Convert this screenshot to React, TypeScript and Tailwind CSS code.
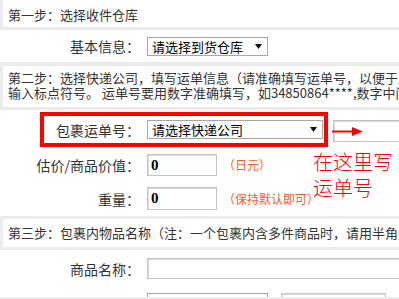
import React from "react";

const font = "font-[family-name:'Noto_Sans_CJK_SC',sans-serif]";

function FakeSelect({ text, width }: { text: string; width: string }) {
  return (
    <div
      className={`${width} h-[19px] shrink-0 border border-[#a6a6a6] bg-white flex items-center justify-between pl-[4px] pr-[5px] text-[13px] leading-[17px] text-black whitespace-nowrap overflow-hidden`}
    >
      <span>{text}</span>
      <svg width="7" height="5" viewBox="0 0 7 5" className="shrink-0">
        <polygon points="0,0 7,0 3.5,5" fill="#111" />
      </svg>
    </div>
  );
}

function TextBox({ value, width, height = "h-[22px]" }: { value?: string; width: string; height?: string }) {
  return (
    <div
      className={`${width} ${height} shrink-0 border border-[#c4c4c4] bg-white shadow-[inset_1px_1px_0_#dcdcdc] flex items-center pl-[3px] text-[15px] font-bold text-black font-[family-name:'Liberation_Serif',serif]`}
    >
      {value}
    </div>
  );
}

function Label({ children, width = "w-[140px]", red }: { children: React.ReactNode; width?: string; red?: boolean }) {
  return (
    <div
      className={`${width} shrink-0 text-right text-[14px] leading-[18px] whitespace-nowrap ${red ? "text-[#ff0000]" : "text-[#333]"}`}
    >
      {children}
    </div>
  );
}

export default function App() {
  return (
    <div className={`w-[399px] h-[299px] overflow-hidden bg-[#ebebeb] ${font}`}>
      <div className="h-[297px] w-[399px] overflow-hidden flex flex-col gap-[3px]">
        {/* Step 1 */}
        <div className="ml-[3px] h-[27px] shrink-0 bg-white pl-[5px] pt-[6px] text-[13px] leading-[17px] text-[#333] whitespace-nowrap">
          第一步：选择收件仓库
        </div>
        <div className="h-[32px] shrink-0 bg-white flex items-center">
          <Label>基本信息：</Label>
          <div className="ml-[7px]">
            <FakeSelect text="请选择到货仓库" width="w-[121px]" />
          </div>
        </div>

        {/* Step 2 */}
        <div className="mt-[1px] ml-[3px] h-[41px] shrink-0 bg-white pl-[5px] pt-[4px] text-[13px] leading-[15px] text-[#333] whitespace-nowrap">
          <div>第二步：选择快递公司，填写运单信息（请准确填写运单号，以便于及时查询入库状态，请勿</div>
          <div>输入标点符号。 运单号要用数字准确填写，如34850864****,数字中间不要有空格）</div>
        </div>
        <div className="relative h-[106px] shrink-0 bg-white pt-[2px]">
          <div className="flex items-start">
            <div className="ml-[40px] w-[288px] h-[35px] shrink-0 border-4 border-[#ff0000] flex items-center">
              <Label width="w-[96px]">包裹运单号：</Label>
              <div className="ml-[7px]">
                <FakeSelect text="请选择快递公司" width="w-[176px]" />
              </div>
            </div>
            <div className="ml-[5px] mt-[8px]">
              <TextBox width="w-[90px]" />
            </div>
          </div>
          <div className="mt-[7px] flex items-center">
            <Label>估价/商品价值：</Label>
            <div className="ml-[7px]">
              <TextBox value="0" width="w-[70px]" />
            </div>
            <span className="ml-[6px] text-[12px] text-[#ff5a1e]">（日元）</span>
          </div>
          <div className="mt-[11px] flex items-center">
            <Label>重量：</Label>
            <div className="ml-[7px]">
              <TextBox value="0" width="w-[70px]" height="h-[23px]" />
            </div>
            <span className="ml-[6px] text-[12px] text-[#ff5a1e]">（保持默认即可）</span>
          </div>

          {/* annotation */}
          <svg
            className="absolute left-[332px] top-[17px]"
            width="31"
            height="9"
            viewBox="0 0 31 9"
          >
            <rect x="0" y="3.5" width="22" height="2" fill="#ff0000" />
            <polygon points="20,0 31,4.5 20,9" fill="#ff0000" />
          </svg>
          <div className="absolute left-[313px] top-[39px] text-[20px] leading-[26px] font-light text-[#ff0000] whitespace-nowrap">
            在这里写
            <br />
            运单号
          </div>
        </div>

        {/* Step 3 */}
        <div className="ml-[3px] h-[28px] shrink-0 bg-white pl-[5px] pt-[5px] text-[13px] leading-[17px] text-[#333] whitespace-nowrap">
          第三步：包裹内物品名称（注：一个包裹内含多件商品时，请用半角逗号隔开）
        </div>
        <div className="flex-1 bg-white pt-[8px]">
          <div className="flex items-center">
            <Label>商品名称：</Label>
            <div className="ml-[7px]">
              <TextBox width="w-[260px]" height="h-[21px]" />
            </div>
          </div>
          <div className="mt-[14px] flex items-start">
            <div className="mt-[4px]">
              <Label red>*商品属性：</Label>
            </div>
            <div className="ml-[7px]">
              <FakeSelect text="请选择商品属性" width="w-[121px]" />
            </div>
            <div className="ml-[13px]">
              <TextBox width="w-[105px]" />
            </div>
            <span className="ml-[10px] text-[12px] text-[#ff0000]">*</span>
          </div>
        </div>
      </div>
    </div>
  );
}
